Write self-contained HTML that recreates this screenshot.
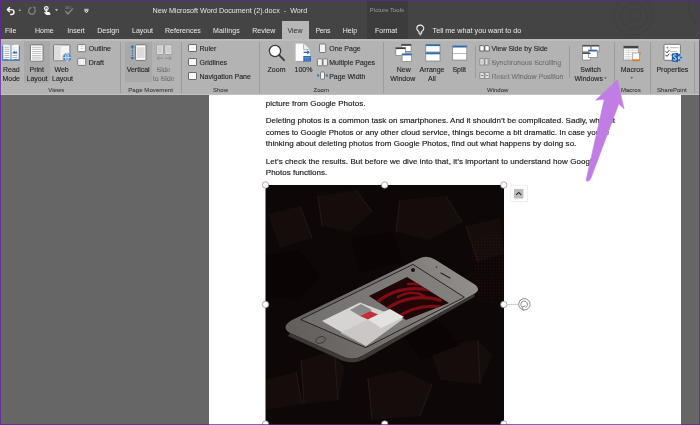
<!DOCTYPE html>
<html><head><meta charset="utf-8">
<style>
*{margin:0;padding:0;box-sizing:border-box}
html,body{width:700px;height:425px;overflow:hidden;background:#666666}
body{position:relative;font-family:"Liberation Sans",sans-serif}
.a{position:absolute;white-space:nowrap}
svg{position:absolute;overflow:visible}
#title{filter:grayscale(1);position:absolute;left:0;top:0;width:700px;height:39px;background:#444444}
#ribbon{position:absolute;left:0;top:39px;width:700px;height:56px;background:#b3b3b3;border-top:2px solid #bcbcbc;border-bottom:1.5px solid #c2c2c2}
.r{margin-top:0.7px;position:absolute;white-space:nowrap;color:#222;-webkit-text-stroke:0.1px #222;font-size:7px;line-height:8px}
.g{color:#8b8b8b}
.gl{margin-top:0.7px;-webkit-text-stroke:0.1px #3c3c3c;position:absolute;white-space:nowrap;font-size:6px;line-height:7px;color:#3c3c3c;top:86.1px}
.tab{margin-top:0.7px;position:absolute;white-space:nowrap;color:#ececec;font-size:7px;line-height:8px;top:26.4px}
.sep{position:absolute;width:1px;background:#9c9c9c}
#page{filter:grayscale(1);position:absolute;left:209px;top:95px;width:471.5px;height:340px;background:#fff;overflow:hidden}
.doc{position:absolute;left:56.8px;font-size:8px;line-height:9px;color:#1a1a1a;white-space:pre;-webkit-text-stroke:0.16px #1a1a1a}
.bd{position:absolute;background:rgba(95,35,160,0.72)}
</style></head><body>
<div id="title">
  <div class="a" style="left:152.5px;top:6.7px;font-size:7.2px;line-height:8px;color:#e6e6e6">New Microsoft Word Document (2).docx&nbsp; - &nbsp;Word</div>
  <div class="tab" style="left:5px">File</div>
  <div class="tab" style="left:35px">Home</div>
  <div class="tab" style="left:67.3px">Insert</div>
  <div class="tab" style="left:97.3px">Design</div>
  <div class="tab" style="left:132px">Layout</div>
  <div class="tab" style="left:165px">References</div>
  <div class="tab" style="left:213px;letter-spacing:0.15px">Mailings</div>
  <div class="tab" style="left:252.3px">Review</div>
  <div class="a" style="left:282px;top:21px;width:27px;height:20px;background:#b7b7b7"></div>
  <div class="tab" style="left:287.5px;color:#2e2e2e">View</div>
  <div class="tab" style="left:315.5px;letter-spacing:-0.35px">Pens</div>
  <div class="tab" style="left:342.8px">Help</div>
  <div class="a" style="left:367px;top:1px;width:40.5px;height:38px;background:#3c3c3c"></div>
  <div class="a" style="left:369.8px;top:7px;font-size:6px;line-height:7px;color:#9c9c9c">Picture Tools</div>
  <div class="tab" style="left:375px">Format</div>
  <div class="tab" style="left:432.6px;font-size:7.2px">Tell me what you want to do</div>
</div>
<div id="ribbon"></div>
<svg width="700" height="425" style="left:0;top:0" viewBox="0 0 700 425">
<!-- title decorative circles -->
<g fill="none" stroke="#3f3f3f" stroke-width="1.1" opacity="0.7">
<circle cx="633" cy="15.5" r="19.5"/><circle cx="634" cy="16" r="13"/><circle cx="635" cy="15" r="6"/>
<circle cx="708" cy="8" r="19"/><circle cx="708" cy="8" r="12"/>
</g>
<!-- QAT -->
<g fill="none" stroke="#f4f4f4" stroke-width="1.45" stroke-linecap="round" stroke-linejoin="round">
<path d="M7.6,9.6 H11.5 A2.45,2.45 0 0 1 11.5,14.5 H10.6"/>
<path d="M9.5,7.6 L7.4,9.6 L9.5,11.6"/>
</g>
<path d="M18.5,9.8 H21 L19.75,11.3 Z" fill="#e0e0e0"/>
<path d="M31.4,7.6 A3.3,3.3 0 1 0 34.9,9.4" fill="none" stroke="#7c7c7c" stroke-width="1.5"/>
<path d="M32.6,6.5 L35.8,6.9 L35.2,10 Z" fill="#7c7c7c"/>
<circle cx="46.3" cy="8.4" r="1.8" fill="none" stroke="#f4f4f4" stroke-width="1.2"/>
<path d="M45.6,8.5 h1.5 v3.2 l1.6,0.3 q1.8,0.3 1.7,1.8 l-0.3,1.3 h-3.8 l-2.1,-2.3 q-0.4,-0.7 0.5,-0.8 l0.9,0.5 z" fill="#f4f4f4"/>
<path d="M55,9.3 H58 L56.5,11.1 Z" fill="#e0e0e0"/>
<path d="M65.6,11.2 L67.9,14 L72.6,8.9" fill="none" stroke="#8a8a8a" stroke-width="1.3" stroke-linecap="round" stroke-linejoin="round"/>
<text x="65.2" y="8.6" font-size="3.2" fill="#808080" font-family="Liberation Sans">ABC</text>
<path d="M84.2,9.3 H88.6" stroke="#e8e8e8" stroke-width="0.9"/>
<path d="M84.6,10.7 H88.2 L86.4,12.8 Z" fill="none" stroke="#e8e8e8" stroke-width="0.9" stroke-linejoin="round"/>
<!-- lightbulb -->
<g fill="none" stroke="#efefef" stroke-width="1.1">
<path d="M419,33.2 V31.6 Q416.8,30.3 416.8,28.6 A3.5,3.5 0 1 1 423.8,28.6 Q423.8,30.3 421.6,31.6 V33.2 Z"/>
<path d="M419.4,34.8 H421.2"/>
</g>
</svg>

<!-- ribbon content in page coords -->
<div id="rc" style="position:absolute;left:0;top:0;width:700px;height:100px;filter:grayscale(1)">
  <!-- Views -->
  <div class="a" style="left:24px;top:41.4px;width:25.7px;height:41.6px;background:#a9a9a9"></div>
  <div class="r" style="left:3px;top:65.1px">Read</div>
  <div class="r" style="left:2.5px;top:74.6px">Mode</div>
  <div class="r" style="left:29.5px;top:65.1px">Print</div>
  <div class="r" style="left:26.5px;top:74.6px">Layout</div>
  <div class="r" style="left:54.5px;top:65.1px">Web</div>
  <div class="r" style="left:52px;top:74.6px">Layout</div>
  <div class="r" style="left:88.8px;top:44.7px">Outline</div>
  <div class="r" style="left:88.8px;top:58.1px">Draft</div>
  <div class="gl" style="left:48.3px">Views</div>
  <div class="sep" style="left:120px;top:42px;height:50.5px"></div>
  <!-- Page movement -->
  <div class="a" style="left:125px;top:41.9px;width:26.8px;height:40.6px;background:#a9a9a9"></div>
  <div class="r" style="left:126.7px;top:65.1px">Vertical</div>
  <div class="r g" style="left:156.5px;top:65.1px">Side</div>
  <div class="r g" style="left:152.8px;top:74.6px">to Side</div>
  <div class="gl" style="left:128.2px;letter-spacing:0.09px">Page Movement</div>
  <div class="sep" style="left:181px;top:42px;height:50.5px"></div>
  <!-- Show -->
  <div class="a" style="left:188.2px;top:44.2px;width:8.4px;height:8px;background:#f7f7f7;border:0.9px solid #6a6a6a;border-radius:1px"></div>
  <div class="a" style="left:188.2px;top:58.1px;width:8.4px;height:8px;background:#f7f7f7;border:0.9px solid #6a6a6a;border-radius:1px"></div>
  <div class="a" style="left:188.2px;top:72.2px;width:8.4px;height:8px;background:#f7f7f7;border:0.9px solid #6a6a6a;border-radius:1px"></div>
  <div class="r" style="left:199.5px;top:44.4px">Ruler</div>
  <div class="r" style="left:199.5px;top:58.3px">Gridlines</div>
  <div class="r" style="left:199.5px;top:72.2px">Navigation Pane</div>
  <div class="gl" style="left:213px">Show</div>
  <div class="sep" style="left:259px;top:42px;height:50.5px"></div>
  <!-- Zoom -->
  <div class="r" style="left:267.6px;top:65.1px">Zoom</div>
  <div class="r" style="left:294.5px;top:65.1px">100%</div>
  <div class="r" style="left:329.2px;top:44.4px">One Page</div>
  <div class="r" style="left:329.2px;top:58.3px">Multiple Pages</div>
  <div class="r" style="left:329.2px;top:72.2px">Page Width</div>
  <div class="gl" style="left:313.6px">Zoom</div>
  <div class="sep" style="left:383px;top:42px;height:50.5px"></div>
  <!-- Window -->
  <div class="r" style="left:396.7px;top:65.1px">New</div>
  <div class="r" style="left:390.3px;top:74.6px">Window</div>
  <div class="r" style="left:419.6px;top:65.1px">Arrange</div>
  <div class="r" style="left:428px;top:74.6px">All</div>
  <div class="r" style="left:452.4px;top:65.1px">Split</div>
  <div class="sep" style="left:475px;top:46px;height:31.5px"></div>
  <div class="r" style="left:491.4px;top:44.5px">View Side by Side</div>
  <div class="r g" style="left:491.4px;top:58.3px">Synchronous Scrolling</div>
  <div class="r g" style="left:491.4px;top:72.2px">Reset Window Position</div>
  <div class="gl" style="left:487px">Window</div>
  <div class="sep" style="left:569px;top:46px;height:31.5px"></div>
  <div class="r" style="left:580.3px;top:65.1px">Switch</div>
  <div class="r" style="left:574.5px;top:74.6px">Windows</div>
  <div class="sep" style="left:614px;top:42px;height:50.5px"></div>
  <!-- Macros -->
  <div class="r" style="left:620.7px;top:65.1px">Macros</div>
  <div class="gl" style="left:621px">Macros</div>
  <div class="sep" style="left:650px;top:42px;height:50.5px"></div>
  <div class="r" style="left:656.4px;top:65.1px">Properties</div>
  <div class="gl" style="left:657px">SharePoint</div>
  <div class="sep" style="left:694px;top:42px;height:50.5px"></div>
</div>
<svg width="700" height="425" style="left:0;top:0" viewBox="0 0 700 425">
<!-- Read Mode book -->
<path d="M2.3,45.8 H19.8 V60.7 H2.3 Z" fill="#2b6cb3"/>
<path d="M3.3,45 Q6.5,44.3 10.5,45.6 V59.4 Q6.5,58.5 3.3,59.2 Z" fill="#fbfbfb" stroke="#dcdcdc" stroke-width="0.3"/>
<path d="M18.8,45 Q15.5,44.3 11.5,45.6 V59.4 Q15.5,58.5 18.8,59.2 Z" fill="#fbfbfb" stroke="#dcdcdc" stroke-width="0.3"/>
<g stroke="#9a9a9a" stroke-width="0.7">
<path d="M4.6,47.2 H9.4 M4.6,49.3 H9.4 M4.6,51.4 H9.4 M4.6,53.5 H9.4 M4.6,55.5 H9.4 M4.6,57.5 H9.4"/>
<path d="M12.5,55.5 H17.3 M12.5,57.5 H17.3"/>
</g>
<path d="M12.5,47 H17.4 V53.4 H12.5 Z" fill="#ececec"/>
<path d="M12.3,53.4 L14.2,50.8 L15.5,52.2 L16.3,51.3 L17.6,53.4 Z" fill="#2b6cb3"/>
<circle cx="16" cy="48.6" r="0.9" fill="#fff"/>
<!-- Print layout page -->
<rect x="30.4" y="44.9" width="12.6" height="16.3" fill="#fff" stroke="#6b6b6b" stroke-width="0.9" rx="0.8"/>
<g stroke="#a8a8a8" stroke-width="0.75">
<path d="M32,47.3 H41.4 M32,49.3 H41.4 M32,51.4 H41.4 M32,53.3 H41.4 M32,55.4 H41.4 M32,57.2 H41.4 M32,59 H41.4"/>
</g>
<!-- Web layout -->
<rect x="53.5" y="44.9" width="16.4" height="15.8" fill="#f4f4f4" stroke="#707070" stroke-width="0.9" rx="0.8"/>
<rect x="54" y="45.4" width="6.7" height="14.8" fill="#dedede"/>
<circle cx="67.1" cy="57.5" r="4.4" fill="#4a84c4" stroke="#b9b9b9" stroke-width="0.6"/>
<path d="M63,57.5 H71.2 M67.1,53.3 V61.7" stroke="#d8e6f5" stroke-width="0.8"/>
<ellipse cx="67.1" cy="57.5" rx="1.7" ry="4.1" fill="none" stroke="#d8e6f5" stroke-width="0.7"/>
<!-- Outline / Draft -->
<rect x="77.7" y="44.6" width="8" height="7.1" fill="#fafafa" stroke="#6e6e6e" stroke-width="0.9" rx="0.8"/>
<path d="M80.5,46.5 H83.5 M80.5,48.5 H83.5" stroke="#c0c0c0" stroke-width="0.6"/>
<rect x="77.7" y="58.3" width="8" height="7.1" fill="#fafafa" stroke="#6e6e6e" stroke-width="0.9" rx="0.8"/>
<path d="M80,58.8 V65 M83.4,58.8 V65" stroke="#d0d0d0" stroke-width="0.6"/>
<!-- Vertical -->
<g fill="#2b6cb3">
<path d="M130.3,47.6 L132.4,45.1 L134.5,47.6 Z"/>
<path d="M130.3,57.2 L132.4,59.7 L134.5,57.2 Z"/>
</g>
<path d="M132.4,47.5 V57.3" stroke="#2b6cb3" stroke-width="1.1" stroke-dasharray="1.3,1.1"/>
<rect x="135.6" y="44.8" width="10.4" height="15.6" fill="#fff" stroke="#6a6a6a" stroke-width="0.9" rx="0.8"/>
<rect x="137" y="47.2" width="7.6" height="11" fill="#dcdcdc"/>
<!-- Side to Side (disabled) -->
<g opacity="0.75">
<rect x="156.6" y="44.8" width="7" height="9.7" fill="#f0f0f0" stroke="#8e8e8e" stroke-width="0.8" rx="0.7"/>
<rect x="164.9" y="44.8" width="7" height="9.7" fill="#f0f0f0" stroke="#8e8e8e" stroke-width="0.8" rx="0.7"/>
<rect x="158" y="46.2" width="4.2" height="7" fill="#d8d8d8"/>
<rect x="166.3" y="46.2" width="4.2" height="7" fill="#d8d8d8"/>
<g fill="none" stroke="#7e7e7e" stroke-width="0.9" stroke-linecap="round" stroke-linejoin="round">
<path d="M157.2,58.2 H162.8 M159.2,56.4 L157.2,58.2 L159.2,60"/>
<path d="M165.3,58.2 H171.2 M169.2,56.4 L171.2,58.2 L169.2,60"/>
</g>
</g>
<!-- Zoom -->
<circle cx="275" cy="51" r="5.6" fill="#fff" stroke="#393939" stroke-width="1.3"/>
<path d="M279.2,55.2 L284,60.2" stroke="#393939" stroke-width="1.8" stroke-linecap="round"/>
<!-- 100% -->
<path d="M295.5,43.6 H303.6 L310,49.6 V61.2 H295.5 Z" fill="#fff" stroke="#c6c6c6" stroke-width="0.5"/>
<path d="M303.6,43.6 V49.6 H310" fill="#eeeeee" stroke="#9a9a9a" stroke-width="0.7"/>
<path d="M295.5,61.6 H310" stroke="#8a8a8a" stroke-width="0.6"/>
<path d="M303.6,52.3 H308.2" stroke="#2b6cb3" stroke-width="1.3"/>
<path d="M307.2,50.2 L310,52.3 L307.2,54.4 Z" fill="#2b6cb3"/>
<rect x="303.3" y="56" width="7.7" height="5.5" fill="#2b6cb3"/>
<path d="M303.8,57.6 H310.5 M305.5,57.6 V61 M307.2,57.6 V61 M308.9,57.6 V61" stroke="#8fb2dc" stroke-width="0.45"/>
<!-- One page -->
<rect x="319.5" y="44" width="6.2" height="8.5" fill="#f2f2f2" stroke="#707070" stroke-width="0.9" rx="0.8"/>
<rect x="317.4" y="58.8" width="4.9" height="7" fill="#f2f2f2" stroke="#707070" stroke-width="0.9" rx="0.8"/>
<rect x="323.1" y="58.8" width="4.3" height="7" fill="#f2f2f2" stroke="#707070" stroke-width="0.9" rx="0.8"/>
<rect x="320.5" y="72" width="4" height="7.1" fill="#f2f2f2" stroke="#707070" stroke-width="0.9" rx="0.7"/>
<path d="M319.6,75.5 L317.4,73.8 V77.2 Z M325.4,75.5 L327.6,73.8 V77.2 Z" fill="#2b6cb3"/>
<!-- New Window -->
<g stroke="#7c7c7c" stroke-width="0.7">
<rect x="401.5" y="44.2" width="9.6" height="7.2" fill="#fff"/>
<rect x="395.8" y="47.5" width="9.6" height="7.8" fill="#fff"/>
<rect x="402.1" y="53.8" width="9.6" height="7.8" fill="#fff"/>
</g>
<rect x="401.5" y="44.2" width="9.6" height="1.6" fill="#3a3a3a"/>
<rect x="395.8" y="47.5" width="9.6" height="1.6" fill="#3a3a3a"/>
<rect x="402.1" y="53.8" width="9.6" height="1.6" fill="#2b6cb3"/>
<!-- Arrange All -->
<g stroke="#7c7c7c" stroke-width="0.7" fill="#fff">
<rect x="425.8" y="44.4" width="14.2" height="7.6"/>
<rect x="425.8" y="52.6" width="14.2" height="8.4"/>
</g>
<rect x="425.8" y="44.4" width="14.2" height="1.7" fill="#2b6cb3"/>
<rect x="425.8" y="52.6" width="14.2" height="1.7" fill="#2b6cb3"/>
<!-- Split -->
<rect x="452.7" y="45.8" width="14.1" height="14.2" fill="#fff" stroke="#7c7c7c" stroke-width="0.7"/>
<rect x="452.7" y="45.8" width="14.1" height="1.7" fill="#2b6cb3"/>
<path d="M452.7,53.5 H466.8" stroke="#8a8a8a" stroke-width="0.6"/>
<!-- View side by side -->
<path d="M479.8,51 V45.6 H483 L484.2,46.6 V51 Z M484.9,51 V45.6 H488.1 L489.3,46.6 V51 Z" fill="#fff" stroke="#4a4a4a" stroke-width="0.8" stroke-linejoin="round"/>
<g opacity="0.8">
<path d="M479.8,65 V58.6 H484.2 V65 Z M485,65 V58.6 H488 V65 Z" fill="#eee" stroke="#6a6a6a" stroke-width="0.7"/>
<path d="M482,60.5 V63.5 M489.5,58 V65.5" stroke="#6a6a6a" stroke-width="0.6" stroke-dasharray="1,0.8"/>
<path d="M479.8,78.5 V72.6 H484.2 V78.5 Z M485,78.5 V72.6 H489.3 V78.5 Z" fill="#eee" stroke="#6a6a6a" stroke-width="0.7"/>
<path d="M481,75.5 H483.2 M486,75.5 H488.3" stroke="#6a6a6a" stroke-width="0.9"/>
</g>
<!-- Switch windows -->
<g stroke="#7c7c7c" stroke-width="0.7" fill="#fff">
<rect x="582.6" y="45.2" width="7.9" height="6.6"/>
<rect x="591.2" y="45.2" width="7.9" height="6.6"/>
<rect x="582.6" y="52.6" width="7.9" height="7.4"/>
<rect x="588.6" y="50" width="8.6" height="7.5"/>
</g>
<rect x="582.6" y="45.2" width="7.9" height="1.3" fill="#3a3a3a"/>
<rect x="591.2" y="45.2" width="7.9" height="1.3" fill="#3a3a3a"/>
<rect x="582.6" y="52.6" width="7.9" height="1.3" fill="#3a3a3a"/>
<rect x="588.6" y="50" width="8.6" height="1.5" fill="#2b6cb3"/>
<path d="M604.2,77.5 H606.6 L605.4,78.9 Z" fill="#3a3a3a"/>
<!-- Macros -->
<rect x="623.6" y="46" width="14.6" height="14" fill="#fff" stroke="#8a8a8a" stroke-width="0.6"/>
<rect x="623.6" y="46" width="14.6" height="2.4" fill="#444"/>
<g stroke="#bdbdbd" stroke-width="0.6">
<path d="M624.5,50.2 H637.5 M624.5,52.4 H637.5 M624.5,54.6 H637.5 M624.5,56.8 H637.5 M624.5,59 H637.5"/><path d="M628.5,48.5 V60 M632.5,48.5 V60" stroke-width="0.35"/>
</g>
<rect x="632.8" y="53" width="6.6" height="7.5" fill="#fff" stroke="#8a8a8a" stroke-width="0.6"/>
<path d="M632.4,59.2 H639.6 V61.6 L638.6,60.9 L637.6,61.6 L636.6,60.9 L635.6,61.6 L634.6,60.9 L633.4,61.6 L632.4,60.9 Z" fill="#e07b22"/>
<rect x="639.6" y="52.2" width="1" height="2.6" fill="#e07b22"/>
<path d="M630.6,77.3 H633 L631.8,78.7 Z" fill="#3a3a3a"/>
<!-- Properties -->
<rect x="664" y="44.3" width="16.4" height="16" fill="#fff" stroke="#6e6e6e" stroke-width="0.9" rx="1"/>
<circle cx="667.4" cy="47.6" r="0.9" fill="#777"/>
<path d="M670,47.7 H678.5 M670,51.6 H677 M670,55 H672" stroke="#9a9a9a" stroke-width="0.7"/>
<path d="M665.6,51.3 L667,52.9 L669.2,50.2 M665.6,54.8 L667,56.4 L669.2,53.7" fill="none" stroke="#2a2a2a" stroke-width="0.9"/>
<circle cx="679.3" cy="55.2" r="1.8" fill="#2b6cb3" stroke="#e8eef6" stroke-width="0.45"/>
<circle cx="681" cy="57.6" r="1.6" fill="#2b6cb3" stroke="#e8eef6" stroke-width="0.45"/>
<circle cx="679.3" cy="60" r="1.5" fill="#2b6cb3" stroke="#e8eef6" stroke-width="0.45"/>
<path d="M671.8,53.6 L678.2,52.8 V62.2 L671.8,61.4 Z" fill="#1f5fa8"/>
<path d="M676.2,55.4 Q675.6,54.7 674.6,54.8 Q673.4,55 673.6,56.3 Q673.8,57.2 675.1,57.6 Q676.4,58.1 676.2,59.2 Q676,60.3 674.6,60.2 Q673.6,60.1 673.2,59.4" fill="none" stroke="#fff" stroke-width="0.9"/>
</svg>

<div id="page">
  <div class="doc" style="top:3.6px">picture from Google Photos.</div>
  <div class="doc" style="top:21.2px;letter-spacing:0.012px">Deleting photos is a common task on smartphones. And it shouldn’t be complicated. Sadly, when it</div>
  <div class="doc" style="top:32.5px;letter-spacing:0.01px">comes to Google Photos or any other cloud service, things become a bit dramatic. In case you’re</div>
  <div class="doc" style="top:43.5px;letter-spacing:0.033px">thinking about deleting photos from Google Photos, find out what happens by doing so.</div>
  <div class="doc" style="top:61.5px;letter-spacing:0.046px">Let’s check the results. But before we dive into that, it’s important to understand how Google</div>
  <div class="doc" style="top:72.9px">Photos functions.</div>
  </div>
<svg width="700" height="425" style="left:0;top:0" viewBox="0 0 700 425">
<rect x="265.5" y="185" width="238.5" height="240" fill="#0e0707"/>
<g fill="#150d0c">
<path d="M300,360 L332,352 L345,368 L338,400 L304,404 Z"/>
<path d="M367,378 L402,370 L432,384 L420,416 L372,420 Z"/>
<path d="M430,348 L478,340 L492,356 L480,384 L440,380 Z"/>
<path d="M266,380 L296,372 L302,404 L266,410 Z"/>
<path d="M318,196 L356,190 L372,212 L350,232 L322,226 Z"/>
<path d="M400,200 L446,196 L462,222 L430,240 L396,232 Z"/>
<path d="M268,214 L300,206 L312,238 L280,248 Z"/>
<path d="M466,226 L500,218 L504,254 L478,262 Z"/>
</g>
<g fill="none" stroke="#261c1a" stroke-width="0.9">
<path d="M301,360 L304,404 M335,358 L338,400 M368,378 L372,420 M432,384 L420,416 M478,340 L480,384 M296,372 L302,404 M318,196 L322,226 M356,190 L372,212 M400,200 L396,232 M446,196 L462,222 M300,206 L312,238 M466,226 L478,262"/>
</g>
<g fill="#0a0404">
<path d="M266,255 L300,250 L320,275 L300,300 L266,296 Z"/>
<path d="M350,238 L392,232 L404,262 L360,272 Z"/>
<path d="M400,330 L440,322 L460,345 L420,360 Z"/>
</g>
<defs><pattern id="dots" width="3" height="3" patternUnits="userSpaceOnUse"><circle cx="1.5" cy="1.5" r="0.6" fill="#4a1416"/></pattern></defs>
<path d="M470,240 L504,232 L504,300 L478,304 Z" fill="url(#dots)" opacity="0.45"/>
<!-- phone body -->
<defs>
<linearGradient id="bodyg" x1="286" y1="340" x2="478" y2="270" gradientUnits="userSpaceOnUse">
<stop offset="0" stop-color="#605d5b"/><stop offset="0.6" stop-color="#7a7774"/><stop offset="1" stop-color="#94918e"/>
</linearGradient>
<linearGradient id="scrg" x1="300" y1="335" x2="464" y2="280" gradientUnits="userSpaceOnUse">
<stop offset="0" stop-color="#716f6d"/><stop offset="1" stop-color="#858380"/>
</linearGradient>
</defs>
<path d="M292,320 L419,258.5 Q427,254.5 435,259.5 L474,284 Q482,289.5 474,294 L362,356 Q353,361 344,357 L290,333 Q280,327 292,320 Z" fill="url(#bodyg)"/>
<path d="M290,333 L344,357 Q353,361 362,356 L474,294 L475,296.5 L364,359.5 Q353,364.5 342,360.5 L288,336 Z" fill="#3c3836"/>
<!-- screen -->
<path d="M300.7,319.5 L413,264.4 L464.4,297.3 L365.6,347.6 Z" fill="url(#scrg)" stroke="#231a1a" stroke-width="0.9"/>
<!-- rose -->
<defs><clipPath id="rc1"><path d="M369,296 L407,277 L449,303 L406,320 Z"/></clipPath></defs>
<path d="M369,296 L407,277 L449,303 L406,320 Z" fill="#210607"/>
<g clip-path="url(#rc1)" fill="none" stroke="#7c0d15" stroke-linecap="round">
<path d="M376,303 Q398,284 430,290" stroke-width="3.2"/>
<path d="M384,311 Q408,292 440,300" stroke-width="3.4"/>
<path d="M396,318 Q420,302 446,308" stroke-width="3"/>
<path d="M398,297 Q412,289 424,296" stroke-width="2.6"/>
<path d="M408,284 Q425,282 440,294" stroke-width="2.4"/>
</g>
<!-- white panel -->
<path d="M322,321 L360,302.5 L403,319 L366,346 Z" fill="#d6d4d2"/>
<path d="M340,333 L385,311 L403,319 L366,346 Z" fill="#c4c2c0" opacity="0.7"/>
<path d="M350,310 L361,304 L372,310 L360,316 Z" fill="#8a8a8a"/>
<path d="M360,316 L370,311 L378,314.5 L368,319.5 Z" fill="#c0303a"/>
<path d="M368,319.5 L390,309 L404,317 L381,328 Z" fill="#e4e2e0"/>
<!-- home button & speaker -->
<ellipse cx="320.5" cy="340" rx="5" ry="3.2" transform="rotate(-18 320.5 340)" fill="none" stroke="#3a3836" stroke-width="0.9"/>
<path d="M441,273 L450,278" stroke="#2a2826" stroke-width="1.4" stroke-linecap="round"/>
<circle cx="436.5" cy="267" r="0.8" fill="#2a2826"/>
<circle cx="413" cy="270" r="2" fill="#1a1414"/>
</svg>


<svg width="700" height="425" style="left:0;top:0" viewBox="0 0 700 425">
<g fill="#fff" stroke="#8a8a8a" stroke-width="0.7">
<circle cx="265.5" cy="185" r="3.2"/><circle cx="384.7" cy="185" r="3.2"/><circle cx="503.8" cy="185" r="3.2"/>
<circle cx="265.5" cy="304.5" r="3.2"/><circle cx="503.8" cy="304.5" r="3.2"/>
<circle cx="265.5" cy="424" r="3.2"/><circle cx="384.7" cy="424" r="3.2"/><circle cx="503.8" cy="424" r="3.2"/>
</g>
<path d="M507,304.5 H518" stroke="#bdbdbd" stroke-width="0.7"/>
<g fill="none" stroke="#8a8a8a" stroke-width="1">
<circle cx="524.4" cy="304.3" r="5.7"/>
<path d="M522,306.9 A3.3,3.3 0 1 1 525.4,307.5"/>
<path d="M523.6,310.6 L522,307.2 L525.4,305.8"/>
</g>
<rect x="510.8" y="185.3" width="16.8" height="16.3" fill="#fff" stroke="#c8c8c8" stroke-width="0.6" stroke-dasharray="1,1"/>
<rect x="514" y="189" width="9.4" height="9.5" fill="#bdbdbd"/>
<path d="M516.2,194.8 L518.7,192.4 L521.2,194.8" fill="none" stroke="#222" stroke-width="1.1"/>
<!-- purple arrow -->
<path d="M617.5,79.8 L624,108.8 L618.8,103.8 L591.2,177.5 Q588.5,183 586,180.5 L604.3,99.2 L595.6,100.2 Z" fill="#c07ee4" stroke="#c07ee4" stroke-width="0.6" stroke-linejoin="round"/>
</svg>

<div class="bd" style="left:0;top:0;width:700px;height:1px"></div>
<div class="bd" style="left:0;top:0;width:1px;height:425px"></div>
<div class="bd" style="left:699px;top:0;width:1px;height:425px"></div>
<div class="bd" style="left:0;top:424px;width:700px;height:1px"></div>
</body></html>
